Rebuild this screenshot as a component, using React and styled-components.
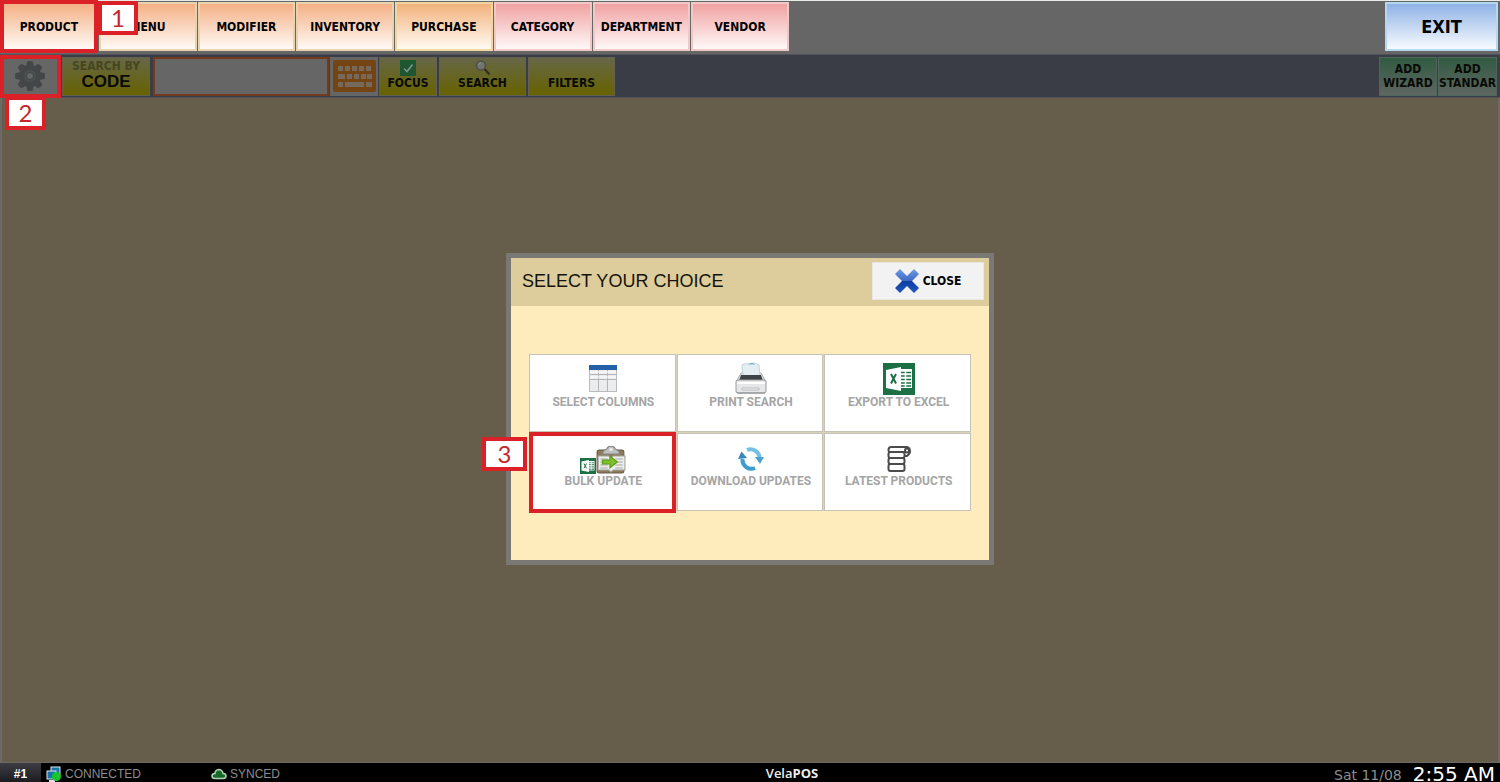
import React from "react";
import styled, { createGlobalStyle, css } from "styled-components";

const tahoma = `"DejaVu Sans Condensed", "DejaVu Sans", sans-serif`;
const arial = `"Liberation Sans", Arial, sans-serif`;
const red = "#dc2027";

const GlobalStyle = createGlobalStyle`
  *, *::before, *::after { box-sizing: border-box; }
  body { margin: 0; font-family: ${tahoma}; color: #000; }
  button, input { font: inherit; color: inherit; margin: 0; border-radius: 0; }
  svg { display: block; flex: none; }
`;

const Page = styled.div`
  display: flex;
  flex-direction: column;
  height: 100vh;
  overflow: hidden;
  background: #666;
`;

const TopBar = styled.header`
  display: flex;
  justify-content: space-between;
  height: 54px;
  flex: none;
  padding: 1px 2px 3px 0;
  border-top: 1px solid #e6ebe6;
  background: #666;
`;

const Tabs = styled.nav`
  display: grid;
  grid-template-columns: repeat(8, 1fr);
  gap: 1px;
  width: 789px;
`;

const tones = {
  peach: ["#f4b085", "#fffaf6", "#e8d3b0"],
  orange: ["#f2b27c", "#fffaf2", "#f0d6a0"],
  pink: ["#f0a2a2", "#fff8f8", "#f0c8c8"],
  blue: ["#8fb2e6", "#f8fbff", "#b4d8ee"],
};

const TopButton = styled.button`
  width: ${(p) => (p.$large ? "113px" : "100%")};
  height: 49px;
  padding: 0;
  border: 2px solid ${(p) => tones[p.$tone][2]};
  background: linear-gradient(${(p) => tones[p.$tone][0]}, ${(p) => tones[p.$tone][1]});
  font-size: ${(p) => (p.$large ? 18 : 12)}px;
  font-weight: bold;
`;

const Marked = styled.div`
  position: relative;
  display: flex;
`;

const Frame = styled.span`
  position: absolute;
  inset: ${(p) => p.$inset};
  border: 4px solid ${red};
  z-index: 3;
  pointer-events: none;
`;

const Callout = styled.span`
  position: absolute;
  z-index: 4;
  display: flex;
  align-items: center;
  justify-content: center;
  width: ${(p) => p.$w}px;
  height: 34px;
  border: 4px solid ${red};
  background: #fff;
  color: #c4262e;
  font: 24px/24px Lato, sans-serif;
  ${(p) => p.$place}
`;

const Workspace = styled.main`
  position: relative;
  display: flex;
  flex-direction: column;
  flex: 1;
  min-height: 0;
`;

const Toolbar = styled.form`
  display: flex;
  align-items: center;
  flex: none;
  height: 44px;
  padding: 0 3px 0 0;
  border-top: 1px solid #50515a;
  border-bottom: 1px solid #50515a;
  background: #3a3c46;
`;

const Spacer = styled.div`
  flex: 1;
`;

const ToolButton = styled.button`
  display: flex;
  flex-direction: column;
  align-items: center;
  justify-content: flex-end;
  width: ${(p) => p.$w}px;
  height: 39px;
  margin-left: ${(p) => p.$gap || 0}px;
  padding: 0 0 5px;
  border: 1px solid #66604f;
  overflow: hidden;
  background: linear-gradient(#666747, #676300);
  color: #0a0a05;
  font-size: 12px;
  font-weight: bold;
  line-height: 14px;
  white-space: nowrap;
  ${(p) => p.$plain && css`
    background: #666;
    border-color: #666;
    padding: 0;
    justify-content: center;
  `}
  ${(p) => p.$green && css`
    background: linear-gradient(#315b42, #5f6662);
    border-color: #4f665a;
  `}
`;

const SearchBy = styled.span`
  color: #46461f;
  line-height: 13px;
`;

const Code = styled.span`
  font: bold 17px/17px ${arial};
`;

const SearchInput = styled.input`
  width: 176px;
  height: 39px;
  margin-left: 3px;
  padding: 0 6px;
  border: 2px solid #733a1c;
  background: #666;
  outline: none;
`;

const Canvas = styled.div`
  flex: 1;
  border: solid #6b6a66;
  border-width: 0 2px 1px;
  background: #665e4b;
`;

const Overlay = styled.div`
  position: absolute;
  inset: 0;
  z-index: 2;
  display: flex;
  align-items: center;
  justify-content: center;
`;

const Dialog = styled.section`
  width: 488px;
  border: 5px solid #7a7875;
  background: #feecbd;
`;

const DialogHeader = styled.div`
  display: flex;
  align-items: center;
  justify-content: space-between;
  height: 48px;
  padding: 0 5px 2px 11px;
  background: #ddcd9c;
`;

const Title = styled.h1`
  margin: 0;
  font: 18px/20px ${arial};
  color: #15130c;
`;

const CloseButton = styled.button`
  display: flex;
  align-items: center;
  justify-content: center;
  gap: 4px;
  width: 112px;
  height: 38px;
  padding: 0;
  border: 1px solid #e9e7e0;
  background: #f2f2f3;
  font-size: 12px;
  font-weight: bold;
`;

const DialogBody = styled.div`
  padding: 48px 18px 49px;
`;

const Choices = styled.div`
  display: grid;
  grid-template-columns: repeat(3, 1fr);
  grid-auto-rows: 78px;
  gap: 1px;
  background: #d8d3bd;
`;

const Choice = styled.button`
  display: flex;
  flex-direction: column;
  align-items: center;
  width: 100%;
  height: 100%;
  padding: 7px 0 0 2px;
  border: 1px solid #c6c2b4;
  background: #fff;
  color: #a5a5a5;
  font: bold 12px/14px Roboto, sans-serif;
  white-space: nowrap;
`;

const IconBox = styled.span`
  display: flex;
  align-items: flex-end;
  justify-content: center;
  height: 33px;
  padding-bottom: ${(p) => p.$lift || 0}px;
`;

const StatusBar = styled.footer`
  display: flex;
  align-items: flex-start;
  flex: none;
  height: 19px;
  overflow: hidden;
  background: #000;
  color: #8c8c8c;
`;

const StatusGroup = styled.div`
  display: flex;
  width: 285px;
  font: 12px/22px ${arial};
`;

const Station = styled.strong`
  flex: none;
  width: 41px;
  margin-right: 5px;
  background: linear-gradient(#3c3c42, #17171b);
  color: #fff;
  text-align: center;
`;

const Status = styled.span`
  display: flex;
  align-items: center;
  gap: 3px;
  flex: none;
  width: ${(p) => p.$w}px;
  height: 22px;
`;

const Brand = styled.div`
  flex: 1;
  color: #eee;
  font: bold 13px/20px "Open Sans", sans-serif;
  text-align: center;
`;

const Light = styled.span`
  font-weight: 600;
`;

const Clock = styled.div`
  display: flex;
  justify-content: flex-end;
  gap: 11px;
  width: 201px;
  padding-right: 5px;
  font: 14px/25px "DejaVu Sans", sans-serif;
  white-space: nowrap;
`;

const Time = styled.span`
  color: #fff;
  font-size: 20px;
  line-height: 23px;
`;

const Gear = () => (
  <svg width="32" height="32" viewBox="0 0 32 32">
    <g fill="#434747">
      {[0, 45, 90, 135, 180, 225, 270, 315].map((a) => (
        <path key={a} d="M13 1.500Q16 .5 19 1.500L20 8H12Z" transform={`rotate(${a} 16 16)`} />
      ))}
      <circle cx="16" cy="16" r="11" />
    </g>
    <circle cx="16" cy="16" r="6" fill="#4c5050" />
    <circle cx="16" cy="16" r="3.500" fill="#666868" stroke="#3f4343" />
  </svg>
);

const Keyboard = () => (
  <svg width="43" height="32" viewBox="0 0 43 32">
    <rect width="43" height="32" rx="2" fill="#744413" />
    <g fill="#74695a">
      {[5, 12, 19, 26, 33].map((x) => <rect key={x} x={x} y="6" width="5" height="5" />)}
      {[5, 14, 21, 28, 34].map((x, i) => <rect key={x} x={x} y="14" width={i === 0 ? 7 : 5} height="5" />)}
      <rect x="5" y="22" width="5" height="5" />
      <rect x="12" y="22" width="19" height="5" />
      <rect x="33" y="22" width="6" height="5" />
    </g>
  </svg>
);

const Check = () => (
  <svg width="16" height="16" viewBox="0 0 16 16">
    <rect width="16" height="16" rx="1" fill="#1d5631" />
    <path d="M4 8.500 7 11.500 12.500 4.500" fill="none" stroke="#87918a" strokeWidth="1.500" />
  </svg>
);

const Magnifier = () => (
  <svg width="16" height="16" viewBox="0 0 16 16">
    <path d="M9 8.500 14.500 14.500" stroke="#332b1d" strokeWidth="2" />
    <circle cx="6" cy="5.500" r="4.500" fill="#71756d" stroke="#4f504b" strokeWidth="1.500" />
    <path d="M3.500 5Q4 3 6 3" fill="none" stroke="#91958e" />
  </svg>
);

const Cross = () => (
  <svg width="24" height="24" viewBox="0 0 24 24">
    <defs>
      <linearGradient id="cross" x2="0" y2="1">
        <stop offset="0" stopColor="#6f9be6" />
        <stop offset=".48" stopColor="#3f6bc4" />
        <stop offset=".52" stopColor="#0c3ea4" />
        <stop offset="1" stopColor="#2458bd" />
      </linearGradient>
    </defs>
    <path d="M5 0 12 7 19 0 24 5 17 12 24 19 19 24 12 17 5 24 0 19 7 12 0 5Z" fill="url(#cross)" />
  </svg>
);

const TableIcon = () => (
  <svg width="28" height="29" viewBox="0 0 28 29">
    <rect x=".5" y="1.500" width="27" height="26" fill="#ececec" stroke="#b9bcbf" />
    <rect width="28" height="5" y="1" fill="#2362a8" />
    <path d="M0 10.500H28M0 15.500H28M9.500 6V28M18.500 6V28" stroke="#b4b7ba" />
    <path d="M1 8H27M1 13H27" stroke="#fff" />
  </svg>
);

const Printer = () => (
  <svg width="32" height="33" viewBox="0 0 32 33">
    <path d="M6 11H26L31 20H1Z" fill="#d7dade" stroke="#aeb2b5" />
    <path d="M8 14 7 3Q9 1 13 2L19 1 24 3 25 14Z" fill="#e5eff3" stroke="#c3d5dc" />
    <path d="M13 2.500Q17-1 20 2.500Z" fill="#77b7d0" />
    <path d="M6 13H26L28 19H4Z" fill="#3f4246" />
    <rect x="1" y="18" width="30" height="13" rx="2" fill="#e7e7e8" stroke="#999b9d" />
    <path d="M2 21H30" stroke="#fff" strokeWidth="2" />
    <path d="M7 26H24V28H7Z" fill="#f7f7f7" stroke="#b8babc" />
    <path d="M2 31H30" stroke="#898b8e" />
  </svg>
);

const Excel = ({ size }) => (
  <svg width={size} height={size} viewBox="0 0 32 32">
    <rect width="32" height="32" fill="#1c7044" />
    <rect x="17" y="6" width="12" height="19" fill="#fff" />
    <path d="M18 9.500H28M18 13H28M18 16.500H28M18 20H28M18 23H28" stroke="#1c7044" strokeWidth="1.500" />
    <path d="M22.500 8V24" stroke="#fff" strokeWidth="1.500" />
    <path d="M3 7 18 4V28L3 25Z" fill="#fff" />
    <path d="M8 11 13 20.500M13 11 8 20.500" stroke="#1c7044" strokeWidth="2" />
  </svg>
);

const Clipboard = () => (
  <svg width="30" height="28" viewBox="0 0 28 28" preserveAspectRatio="none">
    <rect x="1" y="4" width="25" height="23" rx="2" fill="#8d7a5c" stroke="#695a43" />
    <path d="M2 10H12L14 12 16 10H27V24H16L14 26 12 24H2Z" fill="#ededeb" stroke="#a6a49e" />
    <path d="M4 13H11M4 16H11M4 19H11M4 22H11M18 13H25M18 16H25M18 19H25M18 22H25" stroke="#aaa" />
    <path d="M6 7Q7 4 10 3 11 0 14 0T18 3Q21 4 22 7V8H6Z" fill="#bfc0c0" stroke="#858585" />
    <circle cx="14" cy="3.500" r="1.500" fill="#eee" />
    <path d="M6 14H13V10L20 16 13 22V18H6Z" fill="#81bf28" stroke="#579c19" />
  </svg>
);

const Refresh = () => (
  <svg width="26" height="26" viewBox="0 0 26 26">
    <path d="M9 4A9 9 0 0 1 21.500 12" fill="none" stroke="#73bfe5" strokeWidth="4" />
    <path d="M17 11H26L22 18Z" fill="#4da1d0" />
    <path d="M17 22A9 9 0 0 1 4.500 13" fill="none" stroke="#3e9cce" strokeWidth="4" />
    <path d="M0 13 3.500 5.500 9 12Z" fill="#3588bd" />
  </svg>
);

const Receipt = () => (
  <svg width="24" height="26" viewBox="0 0 24 26">
    <g fill="#fff" stroke="#4b4b4b" strokeWidth="2">
      <path d="M4 1H20Q23 2 23 5T20 10H17V6L4 6Q1 6 1.500 3.500T4 1Z" />
      <rect x="1.500" y="6" width="16" height="6" rx="2" />
      <rect x="1.500" y="12" width="16" height="6" rx="2" />
      <rect x="1.500" y="18" width="16" height="7" rx="2" />
      <circle cx="20" cy="4.500" r="2" />
    </g>
  </svg>
);

const Network = () => (
  <svg width="16" height="16" viewBox="0 0 16 16">
    <rect x="5" y="1" width="9" height="8" fill="#1974ac" stroke="#d8e8ef" />
    <rect x="1" y="5" width="9" height="8" fill="#1974ac" stroke="#d8e8ef" />
    <path d="M3 15H9" stroke="#ddd" strokeWidth="2" />
    <circle cx="10.500" cy="10.500" r="4.500" fill="#18c52b" />
  </svg>
);

const Cloud = () => (
  <svg width="16" height="12" viewBox="0 0 16 12">
    <path d="M4 10.500Q1 10.500 1 8T4 5.500Q4 2 8 1.500 11.500 2 12 5.500 15 5.500 15 8T12 10.500Z" fill="#176928" stroke="#b3d1b8" strokeWidth="1.500" />
  </svg>
);

const tabs = [
  ["MENU", "peach"],
  ["MODIFIER", "peach"],
  ["INVENTORY", "peach"],
  ["PURCHASE", "orange"],
  ["CATEGORY", "pink"],
  ["DEPARTMENT", "pink"],
  ["VENDOR", "pink"],
];

const ChoiceItem = ({ icon, lift, children }) => (
  <Choice type="button">
    <IconBox $lift={lift}>{icon}</IconBox>
    {children}
  </Choice>
);

export default function App() {
  return (
    <Page>
      <GlobalStyle />
      <TopBar>
        <Tabs>
          <Marked>
            <TopButton type="button" $tone="peach">PRODUCT</TopButton>
            <Frame $inset="-2px 0 -2px 0" />
            <Callout $w={40} $place="left: 98px; top: -1px;">1</Callout>
          </Marked>
          {tabs.map(([name, tone]) => (
            <TopButton key={name} type="button" $tone={tone}>{name}</TopButton>
          ))}
        </Tabs>
        <TopButton type="button" $tone="blue" $large>EXIT</TopButton>
      </TopBar>

      <Workspace>
        <Toolbar onSubmit={(e) => e.preventDefault()}>
          <Marked>
            <ToolButton type="button" $w={60} $plain aria-label="Settings"><Gear /></ToolButton>
            <Frame $inset="-2px -1px -2px 0" />
            <Callout $w={41} $place="left: 5px; top: 39px;">2</Callout>
          </Marked>
          <ToolButton type="button" $w={88} $gap={2}>
            <SearchBy>SEARCH BY</SearchBy>
            <Code>CODE</Code>
          </ToolButton>
          <SearchInput type="text" aria-label="Search by code" />
          <ToolButton type="button" $w={48} $gap={1} $plain aria-label="Keyboard"><Keyboard /></ToolButton>
          <ToolButton type="button" $w={58} $gap={1}><Check />FOCUS</ToolButton>
          <ToolButton type="submit" $w={87} $gap={2}><Magnifier />SEARCH</ToolButton>
          <ToolButton type="button" $w={87} $gap={2}>FILTERS</ToolButton>
          <Spacer />
          <ToolButton type="button" $w={58} $green>ADD<br />WIZARD</ToolButton>
          <ToolButton type="button" $w={59} $gap={1} $green>ADD<br />STANDAR</ToolButton>
        </Toolbar>
        <Canvas />

        <Overlay>
          <Dialog role="dialog" aria-labelledby="choice-title">
            <DialogHeader>
              <Title id="choice-title">SELECT YOUR CHOICE</Title>
              <CloseButton type="button"><Cross />CLOSE</CloseButton>
            </DialogHeader>
            <DialogBody>
              <Choices>
                <ChoiceItem icon={<TableIcon />} lift={2}>SELECT COLUMNS</ChoiceItem>
                <ChoiceItem icon={<Printer />}>PRINT SEARCH</ChoiceItem>
                <ChoiceItem icon={<Excel size={32} />}>EXPORT TO EXCEL</ChoiceItem>
                <Marked>
                  <ChoiceItem icon={<><Excel size={16} /><Clipboard /></>}>BULK UPDATE</ChoiceItem>
                  <Frame $inset="-1px 0 -2px 0" />
                  <Callout $w={45} $place="left: -47px; top: 4px;">3</Callout>
                </Marked>
                <ChoiceItem icon={<Refresh />} lift={2}>DOWNLOAD UPDATES</ChoiceItem>
                <ChoiceItem icon={<Receipt />} lift={2}>LATEST PRODUCTS</ChoiceItem>
              </Choices>
            </DialogBody>
          </Dialog>
        </Overlay>
      </Workspace>

      <StatusBar>
        <StatusGroup>
          <Station>#1</Station>
          <Status $w={165}><Network />CONNECTED</Status>
          <Status $w={74}><Cloud />SYNCED</Status>
        </StatusGroup>
        <Brand><Light>Vela</Light>POS</Brand>
        <Clock>
          <span>Sat 11/08</span>
          <Time>2:55 AM</Time>
        </Clock>
      </StatusBar>
    </Page>
  );
}
